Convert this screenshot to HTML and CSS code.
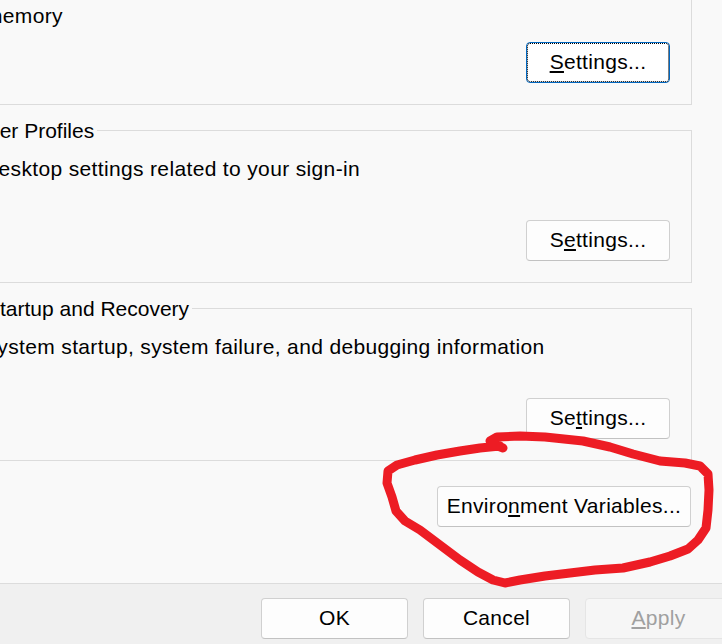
FILE: index.html
```html
<!DOCTYPE html>
<html lang="en">
<head>
<meta charset="utf-8">
<title>System Properties - Advanced</title>
<link rel="stylesheet" href="styles.css">
</head>
<body>
<div class="dialog">
  <div class="tabpage">
    <div class="groups">
      <section class="group group--perf">
        <div class="group-title">Performance</div>
        <p class="desc">Visual effects, processor scheduling, memory usage, and virtual<br>memory</p>
        <div class="actions"><button class="btn btn--settings btn--default"><u>S</u>ettings...</button></div>
      </section>
      <section class="group group--profiles">
        <div class="group-title">User Profiles</div>
        <p class="desc">Desktop settings related to your sign-in</p>
        <div class="actions"><button class="btn btn--settings">S<u>e</u>ttings...</button></div>
      </section>
      <section class="group group--startup">
        <div class="group-title">Startup and Recovery</div>
        <p class="desc">System startup, system failure, and debugging information</p>
        <div class="actions"><button class="btn btn--settings">Se<u>t</u>tings...</button></div>
      </section>
      <div class="env-row"><button class="btn btn--env">Enviro<u>n</u>ment Variables...</button></div>
    </div>
  </div>
  <div class="footer">
    <button class="btn btn--footer">OK</button>
    <button class="btn btn--footer">Cancel</button>
    <button class="btn btn--footer btn--disabled" disabled><u>A</u>pply</button>
  </div>
  <svg class="annotation" viewBox="0 0 722 644" width="722" height="644" aria-hidden="true">
    <path d="M503 448 L495 445 L490 441 L497 437 L520 436 L545 437 L583 441 L610 447 L633 454 L660 461 L685 463 L700 466 L708 474 L709 490 L708 510 L706 528 L698 540 L688 549 L670 556 L650 562 L623 568 L595 570 L570 573 L545 576 L520 580 L505 583 L493 580 L478 572 L460 560 L440 545 L420 530 L405 521 L396 511 L392 497 L387 483 L388 471 L397 465 L415 460 L437 455 L460 451 L480 448 L500 446" />
  </svg>
</div>
</body>
</html>
```

FILE: styles.css
```css
html, body {
  margin: 0;
  padding: 0;
}

body {
  width: 722px;
  height: 644px;
  overflow: hidden;
  background: #f0f0f0;
  font-family: "Liberation Sans", Arial, sans-serif;
  font-size: 21px;
  color: #000;
}

.dialog {
  position: relative;
  width: 722px;
  height: 644px;
  overflow: hidden;
}

.tabpage {
  height: 584px;
  box-sizing: border-box;
  background: #f9f9f9;
  border-bottom: 1px solid #dcdcdc;
  overflow: hidden;
}

.groups {
  margin-left: -40px;
  width: 732px;
}

.group {
  border: 1px solid #dcdcdc;
  padding: 0 21px 21px 22px;
}

.group--perf {
  margin-top: -50px;
}

.group + .group {
  margin-top: 25px;
}

.group-title {
  width: fit-content;
  margin-top: -14px;
  padding-right: 3px;
  line-height: 27px;
  background: #f9f9f9;
  white-space: nowrap;
}

.group--profiles .group-title {
  margin-left: -9px;
}

.group--startup .group-title {
  margin-left: 3px;
}

.desc {
  margin: 11px 0 0;
  line-height: 27px;
  letter-spacing: 0.35px;
  white-space: nowrap;
}

.group--perf .desc {
  margin-left: 2px;
}

.actions {
  display: flex;
  justify-content: flex-end;
  margin-top: 38px;
}

.group--perf .actions {
  margin-top: 13px;
}

.btn {
  box-sizing: border-box;
  height: 41px;
  padding: 5px 0 7px;
  font-family: inherit;
  font-size: 21px;
  line-height: 27px;
  letter-spacing: 0.3px;
  color: #000;
  background: #fdfdfd;
  border: 1px solid #d0d0d0;
  border-bottom-color: #c2c2c2;
  border-radius: 4px;
  flex-shrink: 0;
  white-space: nowrap;
}

.btn u {
  text-underline-offset: 2px;
}

.btn--settings {
  width: 144px;
}

.btn--default {
  background: #ffffff;
  border-color: #0067c0;
  outline: 1px dotted #000;
  outline-offset: -2px;
}

.env-row {
  display: flex;
  justify-content: flex-end;
  padding-right: 1px;
  margin-top: 25px;
}

.btn--env {
  width: 254px;
}

.footer {
  display: flex;
  gap: 15px;
  height: 60px;
  box-sizing: border-box;
  padding: 14px 0 0 261px;
  background: #f0f0f0;
}

.btn--footer {
  width: 147px;
}

.btn--disabled {
  color: #a0a0a0;
  background: #f6f6f6;
  border-color: #e5e5e5;
}

.annotation {
  position: absolute;
  left: 0;
  top: 0;
  pointer-events: none;
}

.annotation path {
  fill: none;
  stroke: #ed1c24;
  stroke-width: 9;
  stroke-linecap: round;
  stroke-linejoin: round;
}
```
